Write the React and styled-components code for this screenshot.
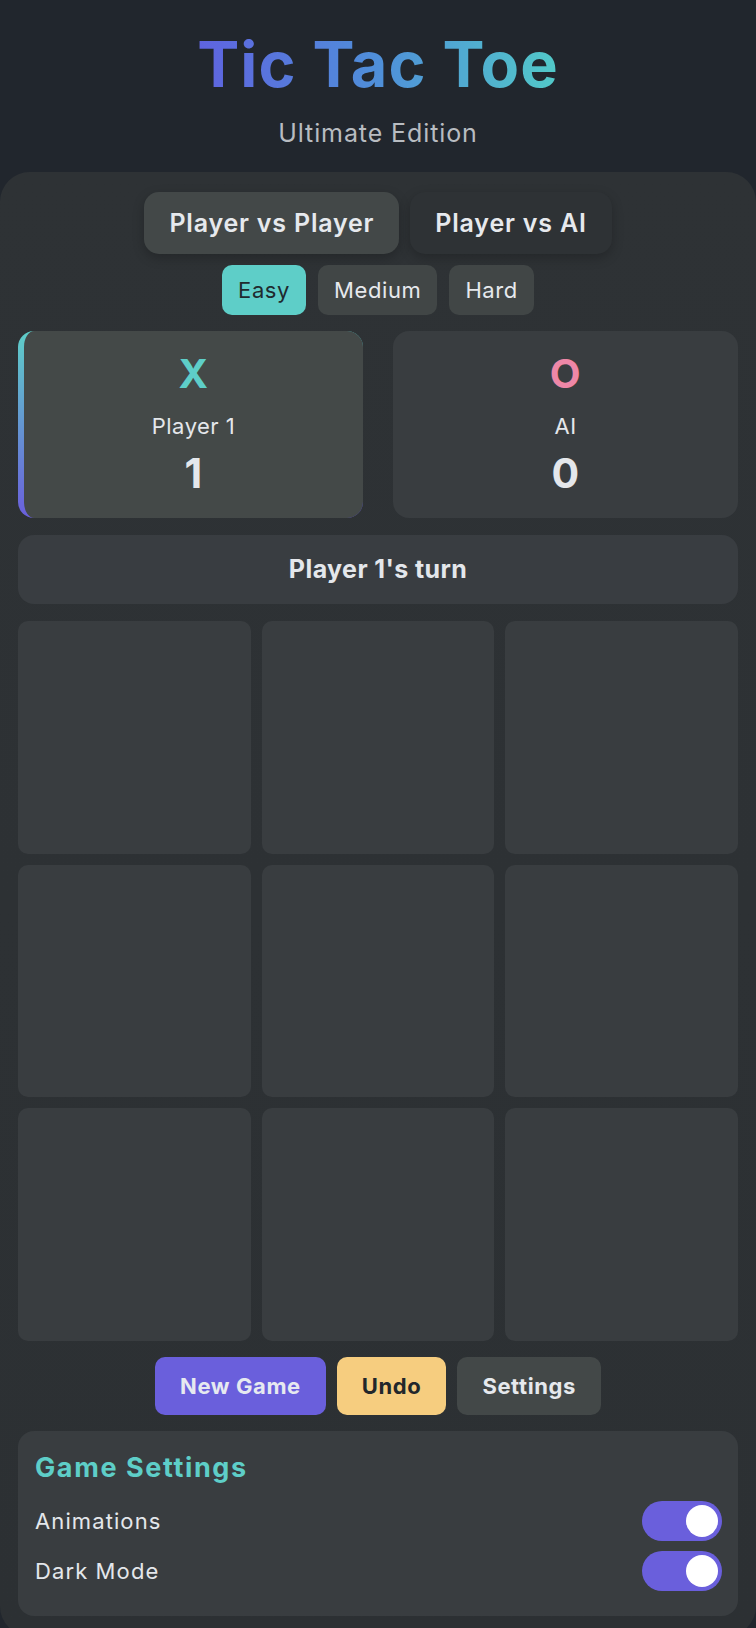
import React, { useState } from "react";
import styled, { createGlobalStyle } from "styled-components";

const Global = createGlobalStyle`
  * { box-sizing: border-box; }
  html, body { margin: 0; padding: 0; }
  body {
    background: #21262d;
    font-family: Inter, "Noto Sans", sans-serif;
    color: #e4e7eb;
    letter-spacing: 0.03em;
  }
`;

const Page = styled.div`
  display: flex;
  flex-direction: column;
  align-items: stretch;
`;

const Header = styled.header`
  display: flex;
  flex-direction: column;
  align-items: center;
  padding-top: 33px;
`;

const Title = styled.h1`
  margin: 0;
  font-size: 63px;
  line-height: 1;
  font-weight: 700;
  letter-spacing: 1px;
  background: linear-gradient(90deg, #5f63e0 0%, #4f8fd9 50%, #52c9c8 100%);
  -webkit-background-clip: text;
  background-clip: text;
  color: transparent;
`;

const Subtitle = styled.p`
  margin: 25px 0 0;
  font-size: 25px;
  line-height: 1;
  color: #b8bcc1;
  letter-spacing: 0.9px;
`;

const Card = styled.main`
  margin-top: 26px;
  background: linear-gradient(180deg, #2e3235 0%, #2c3033 100%);
  border-radius: 30px;
  padding: 20px 18px 20px;
  display: flex;
  flex-direction: column;
`;

const Row = styled.div`
  display: flex;
  justify-content: center;
  gap: ${(p) => p.$gap || 11}px;
  margin-top: ${(p) => p.$mt || 0}px;
`;

const ModeButton = styled.button`
  height: 62px;
  padding: 0 25px;
  border: none;
  border-radius: 15px;
  font-family: inherit;
  font-size: 25px;
  font-weight: 600;
  letter-spacing: 0.8px;
  line-height: 1;
  color: #e6e9ed;
  background: ${(p) => (p.$active ? "#434848" : "#2e3235")};
  box-shadow: 0 4px 12px rgba(0, 0, 0, 0.22);
`;

const DiffButton = styled.button`
  height: 50px;
  padding: 0 16px;
  border: none;
  border-radius: 10px;
  font-family: inherit;
  font-size: 22px;
  font-weight: 400;
  letter-spacing: 0.6px;
  line-height: 1;
  color: ${(p) => (p.$active ? "#1f2a2e" : "#e6e9ed")};
  background: ${(p) => (p.$active ? "#5ecec8" : "#414646")};
`;

const Scores = styled.div`
  display: grid;
  grid-template-columns: 1fr 1fr;
  gap: 30px;
  margin-top: 16px;
`;

const ScoreCard = styled.div`
  height: 187px;
  border-radius: 16px;
  display: flex;
  flex-direction: column;
  align-items: center;
  padding-top: 23px;
  border-left: ${(p) => (p.$active ? "6px solid transparent" : "none")};
  background: ${(p) =>
    p.$active
      ? "linear-gradient(#444948, #444948) padding-box, linear-gradient(180deg, #5ecec8, #6a5fdc) border-box"
      : "#393d40"};
`;

const Symbol = styled.div`
  font-size: 40px;
  line-height: 1;
  font-weight: 700;
  color: ${(p) => p.$color};
`;

const PlayerName = styled.div`
  margin-top: 21px;
  font-size: 22px;
  line-height: 1;
  color: #e4e7eb;
`;

const Score = styled.div`
  margin-top: 16px;
  font-size: 41px;
  line-height: 1;
  font-weight: 700;
  color: #e4e7eb;
`;

const Status = styled.div`
  margin-top: 17px;
  height: 69px;
  border-radius: 16px;
  background: #393d41;
  display: flex;
  align-items: center;
  justify-content: center;
  font-size: 25px;
  font-weight: 700;
  letter-spacing: 0.4px;
  line-height: 1;
`;

const Board = styled.div`
  margin-top: 17px;
  display: grid;
  grid-template-columns: repeat(3, 1fr);
  gap: 11px;
`;

const Cell = styled.button`
  aspect-ratio: 1 / 1;
  border: none;
  border-radius: 10px;
  background: #393d40;
  padding: 0;
`;

const ActionButton = styled.button`
  height: 58px;
  padding: 0 25px;
  border: none;
  border-radius: 10px;
  font-family: inherit;
  font-size: 22px;
  font-weight: 700;
  letter-spacing: 0.6px;
  line-height: 1;
  color: ${(p) => p.$fg};
  background: ${(p) => p.$bg};
`;

const SettingsPanel = styled.section`
  margin-top: 16px;
  background: #393d40;
  border-radius: 16px;
  padding: 23px 16px 25px 17px;
  display: flex;
  flex-direction: column;
`;

const SettingsTitle = styled.h2`
  margin: 0 0 20px;
  font-size: 27px;
  line-height: 1;
  font-weight: 700;
  color: #5ecec8;
  letter-spacing: 1.6px;
`;

const SettingRow = styled.div`
  display: flex;
  align-items: center;
  justify-content: space-between;
  height: 40px;
  & + & {
    margin-top: 10px;
  }
`;

const SettingLabel = styled.span`
  font-size: 22px;
  line-height: 1;
  color: #e4e7eb;
  letter-spacing: 1.1px;
`;

const Toggle = styled.button`
  width: 80px;
  height: 40px;
  border: none;
  border-radius: 20px;
  padding: 4px;
  background: ${(p) => (p.$on ? "#6a5fdc" : "#555a5c")};
  display: flex;
  justify-content: ${(p) => (p.$on ? "flex-end" : "flex-start")};
  align-items: center;
`;

const Knob = styled.span`
  width: 32px;
  height: 32px;
  border-radius: 50%;
  background: #ffffff;
`;

export default function App() {
  const [mode, setMode] = useState("pvp");
  const [diff, setDiff] = useState("Easy");
  const [anim, setAnim] = useState(true);
  const [dark, setDark] = useState(true);

  return (
    <Page>
      <Global />
      <Header>
        <Title>Tic Tac Toe</Title>
        <Subtitle>Ultimate Edition</Subtitle>
      </Header>
      <Card>
        <Row $gap={11}>
          <ModeButton $active={mode === "pvp"} onClick={() => setMode("pvp")}>
            Player vs Player
          </ModeButton>
          <ModeButton $active={mode === "pva"} onClick={() => setMode("pva")}>
            Player vs AI
          </ModeButton>
        </Row>
        <Row $gap={12} $mt={11}>
          {["Easy", "Medium", "Hard"].map((d) => (
            <DiffButton key={d} $active={diff === d} onClick={() => setDiff(d)}>
              {d}
            </DiffButton>
          ))}
        </Row>
        <Scores>
          <ScoreCard $active>
            <Symbol $color="#5ecec8">X</Symbol>
            <PlayerName>Player 1</PlayerName>
            <Score>1</Score>
          </ScoreCard>
          <ScoreCard>
            <Symbol $color="#ee87a7">O</Symbol>
            <PlayerName>AI</PlayerName>
            <Score>0</Score>
          </ScoreCard>
        </Scores>
        <Status>Player 1's turn</Status>
        <Board>
          {Array.from({ length: 9 }).map((_, i) => (
            <Cell key={i} aria-label={`cell ${i + 1}`} />
          ))}
        </Board>
        <Row $gap={11} $mt={16}>
          <ActionButton $bg="#6a5fdc" $fg="#e6e9f0">New Game</ActionButton>
          <ActionButton $bg="#f6cd7f" $fg="#22272b">Undo</ActionButton>
          <ActionButton $bg="#434848" $fg="#e6e9ed">Settings</ActionButton>
        </Row>
        <SettingsPanel>
          <SettingsTitle>Game Settings</SettingsTitle>
          <SettingRow>
            <SettingLabel>Animations</SettingLabel>
            <Toggle $on={anim} onClick={() => setAnim(!anim)}>
              <Knob />
            </Toggle>
          </SettingRow>
          <SettingRow>
            <SettingLabel>Dark Mode</SettingLabel>
            <Toggle $on={dark} onClick={() => setDark(!dark)}>
              <Knob />
            </Toggle>
          </SettingRow>
        </SettingsPanel>
      </Card>
    </Page>
  );
}
